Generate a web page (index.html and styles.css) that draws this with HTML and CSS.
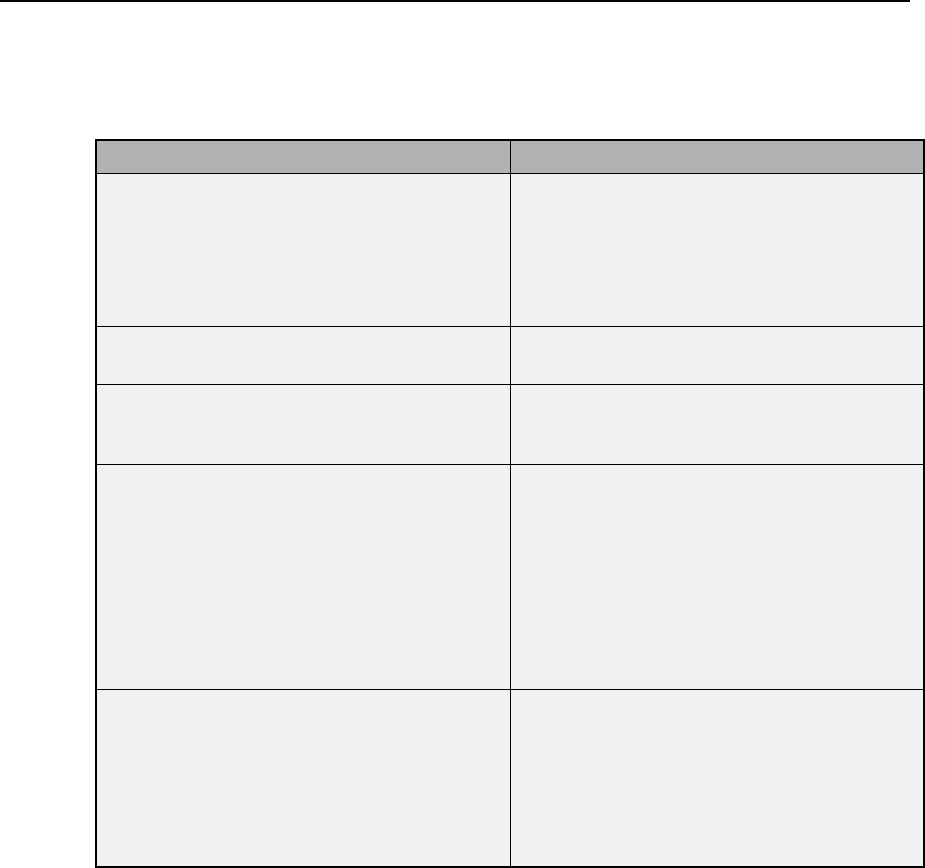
FILE: index.html
```html
<!DOCTYPE html>
<html>
<head>
<meta charset="utf-8">
<link rel="stylesheet" href="styles.css">
</head>
<body>
<div class="rule"></div>
<div class="sheet">
  <div class="cell head"></div><div class="cell head"></div>
  <div class="cell"></div><div class="cell"></div>
  <div class="cell"></div><div class="cell"></div>
  <div class="cell"></div><div class="cell"></div>
  <div class="cell"></div><div class="cell"></div>
  <div class="cell"></div><div class="cell"></div>
</div>
</body>
</html>
```
FILE: styles.css
```css
html, body {
  margin: 0;
  padding: 0;
  background: #ffffff;
  font-family: "Liberation Sans", Arial, sans-serif;
}
.rule {
  width: 910px;
  height: 2px;
  background: #000000;
}
.sheet {
  margin: 137px 0 0 95px;
  width: 826px;
  border: 2px solid #000000;
  background: #000000;
  display: grid;
  grid-template-columns: 413px 412px;
  grid-template-rows: 32px 152px 57px 79px 224px 176px;
  gap: 1px;
}
.cell {
  background: #f1f1f1;
}
.cell.head {
  background: #b2b2b2;
}
```
